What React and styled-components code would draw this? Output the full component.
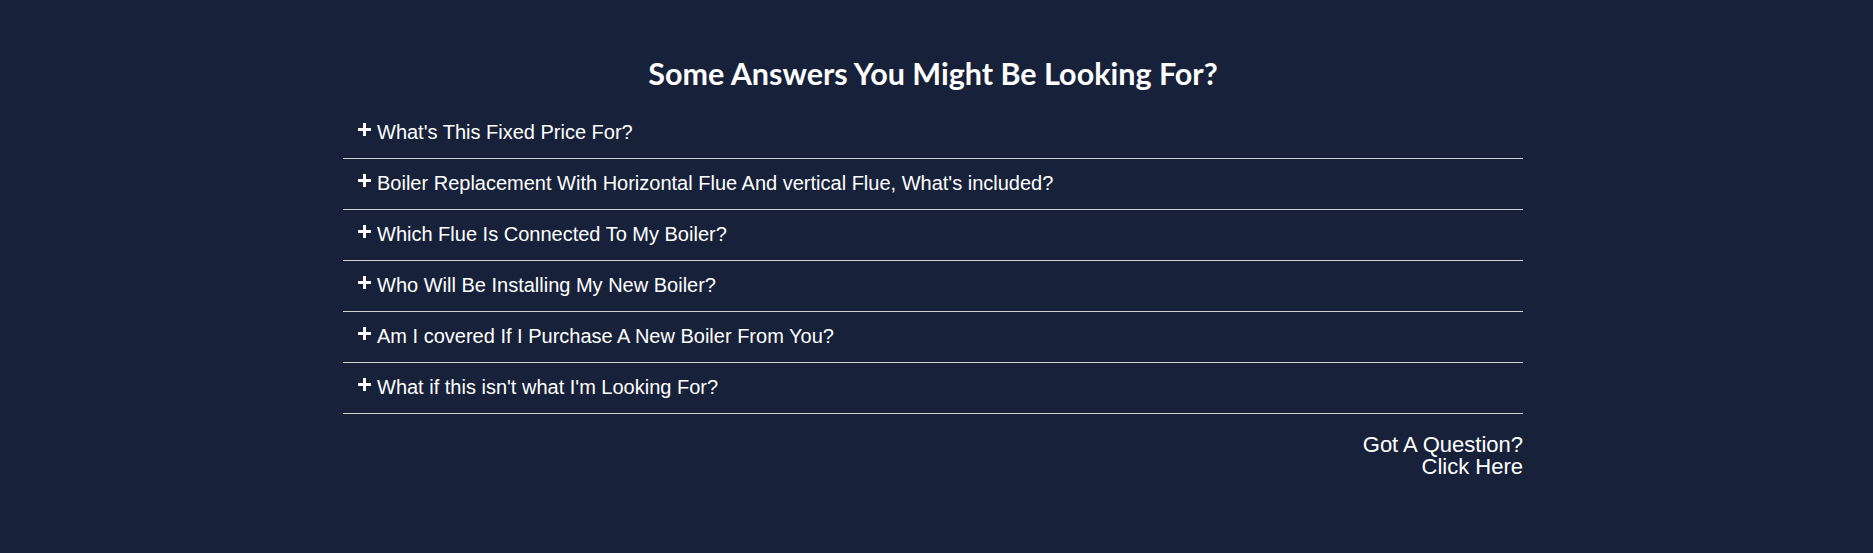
import React from "react";
import styled, { createGlobalStyle } from "styled-components";

const GlobalStyle = createGlobalStyle`
  html, body {
    margin: 0;
    padding: 0;
    background: #17223a;
  }
  body {
    min-height: 100vh;
    font-family: "Liberation Sans", Arial, sans-serif;
    color: #fff;
  }
`;

const Page = styled.div`
  display: flex;
  justify-content: center;
  padding: 55px 7px 40px 0;
`;

const Container = styled.section`
  width: 1180px;
  display: flex;
  flex-direction: column;
`;

const Heading = styled.h2`
  margin: 0 0 17px;
  font-family: Lato, "Open Sans", sans-serif;
  font-weight: 700;
  font-size: 30.5px;
  line-height: 36px;
  text-align: center;
  color: #fff;
`;

const List = styled.div`
  display: flex;
  flex-direction: column;
`;

const Row = styled.div`
  display: flex;
  align-items: flex-start;
  gap: 6px;
  padding: 13px 15px 14px;
  border-bottom: 1px solid #cfcfcf;
  cursor: pointer;
`;

const PlusIcon = styled.svg`
  flex: none;
  width: 13px;
  height: 13px;
  margin-top: 2px;
`;

const Question = styled.span`
  font-size: 20px;
  line-height: 23px;
  color: #fff;
`;

const Footer = styled.div`
  margin-top: 20px;
  text-align: right;
  font-size: 22px;
  line-height: 22px;
  color: #fff;
`;

const FooterLink = styled.a`
  color: #fff;
  text-decoration: none;
`;

const questions = [
  "What's This Fixed Price For?",
  "Boiler Replacement With Horizontal Flue And vertical Flue, What's included?",
  "Which Flue Is Connected To My Boiler?",
  "Who Will Be Installing My New Boiler?",
  "Am I covered If I Purchase A New Boiler From You?",
  "What if this isn't what I'm Looking For?",
];

const Plus = () => (
  <PlusIcon viewBox="0 0 13 13" aria-hidden="true">
    <rect x="0" y="5" width="13" height="3" fill="#fff" />
    <rect x="5" y="0" width="3" height="13" fill="#fff" />
  </PlusIcon>
);

export default function App() {
  return (
    <>
      <GlobalStyle />
      <Page>
        <Container>
          <Heading>Some Answers You Might Be Looking For?</Heading>
          <List>
            {questions.map((q) => (
              <Row key={q}>
                <Plus />
                <Question>{q}</Question>
              </Row>
            ))}
          </List>
          <Footer>
            <div>Got A Question?</div>
            <FooterLink href="#">Click Here</FooterLink>
          </Footer>
        </Container>
      </Page>
    </>
  );
}
